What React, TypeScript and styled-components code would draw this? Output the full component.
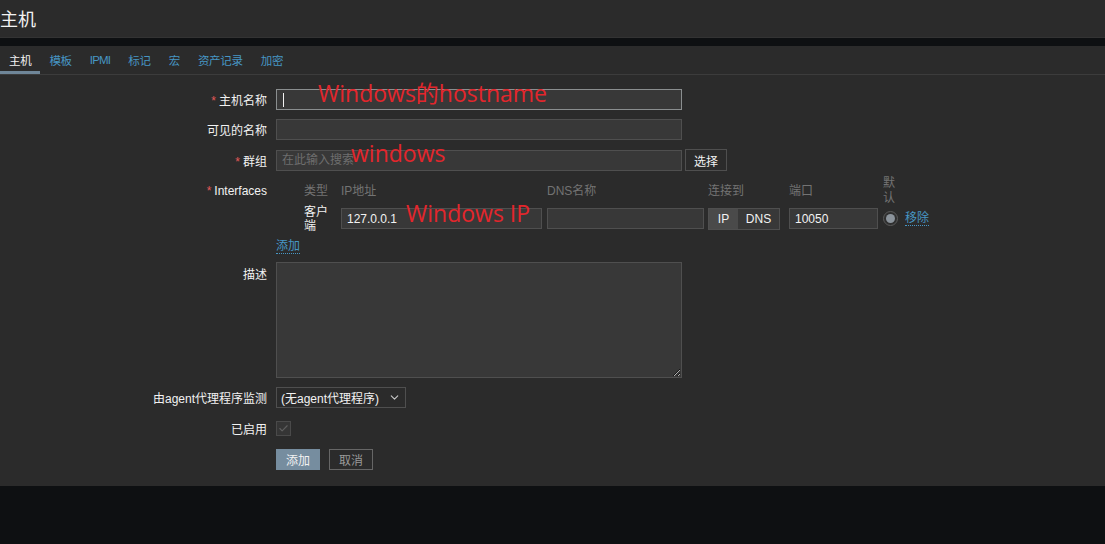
import * as React from 'react';
import styled, { createGlobalStyle } from 'styled-components';
import { ChevronDown, Check } from 'lucide-react';

const GlobalStyle = createGlobalStyle`
  html, body {
    margin: 0;
    padding: 0;
    background: #0e1012;
    color: #f2f2f2;
    font-family: Arial, "Liberation Sans", "Noto Sans CJK SC", sans-serif;
    font-size: 12px;
  }
  * { box-sizing: border-box; }
`;

const Page = styled.div`
  width: 1105px;
  height: 544px;
  overflow: hidden;
  background: #0e1012;
`;

const Header = styled.header`
  height: 38px;
  background: #2b2b2b;
  display: flex;
  align-items: center;
  border-bottom: 1px solid #333;
`;

const Title = styled.h1`
  margin: 0;
  font-size: 18px;
  font-weight: normal;
  color: #f2f2f2;
  padding-bottom: 1px;
`;

const Container = styled.div`
  margin-top: 8px;
  background: #2b2b2b;
  padding-bottom: 16px;
`;

const TabBar = styled.nav`
  display: flex;
  height: 29px;
  border-bottom: 1px solid #3c3c3c;
`;

const Tab = styled.span<{ $active?: boolean }>`
  padding: 2px 9px 0;
  display: flex;
  align-items: center;
  font-size: 11.5px;
  letter-spacing: -0.3px;
  color: ${p => (p.$active ? '#f2f2f2' : '#4796c4')};
  border-bottom: 3px solid ${p => (p.$active ? '#6f8698' : 'transparent')};
`;

const TabLatin = styled.span`
  letter-spacing: -0.8px;
`;

const Form = styled.div`
  position: relative;
  padding-top: 14px;
  display: flex;
  flex-direction: column;
`;

const Row = styled.div<{ $mt?: number; $top?: boolean }>`
  display: flex;
  align-items: ${p => (p.$top ? 'flex-start' : 'center')};
  margin-top: ${p => p.$mt ?? 0}px;
`;

const Label = styled.label<{ $pt?: number }>`
  width: 276px;
  padding-right: 9px;
  text-align: right;
  color: #f2f2f2;
  padding-top: ${p => p.$pt ?? 0}px;
  flex-shrink: 0;
`;

const Req = styled.span`
  color: #e45959;
  margin-right: 3px;
`;

const Field = styled.div`
  display: flex;
  align-items: center;
  gap: 3px;
`;

const InputWrap = styled.div`
  position: relative;
  display: flex;
`;

const Caret = styled.span`
  position: absolute;
  left: 7px;
  top: 4px;
  width: 1px;
  height: 14px;
  background: #f2f2f2;
`;

const Input = styled.input<{ $w: number; $focus?: boolean }>`
  width: ${p => p.$w}px;
  height: 21px;
  background: #383838;
  border: 1px solid ${p => (p.$focus ? '#8a8e8f' : '#4f4f4f')};
  color: #f2f2f2;
  font: inherit;
  padding: 0 5px;
  outline: none;
  &::placeholder { color: #6e6e6e; }
`;

const TextArea = styled.textarea`
  width: 406px;
  height: 116px;
  background: #383838;
  border: 1px solid #4f4f4f;
  color: #f2f2f2;
  font: inherit;
  outline: none;
  color-scheme: dark;
`;

const GrayButton = styled.button`
  height: 22px;
  padding: 0 8px;
  background: #2b2b2b;
  border: 1px solid #4f4f4f;
  color: #f2f2f2;
  font: inherit;
`;

const IfaceGrid = styled.div`
  display: grid;
  grid-template-columns: 28px 37px 206px 161px 81px 94px 22px auto;
  grid-template-rows: 28px 23px;
  row-gap: 2px;
  align-items: center;
`;

const ColHead = styled.span`
  color: #737373;
  line-height: 15px;
`;

const TypeCell = styled.span`
  color: #f2f2f2;
  line-height: 14px;
  width: 26px;
`;

const Toggle = styled.div`
  display: flex;
  width: 72px;
  height: 22px;
  border: 1px solid #4f4f4f;
`;

const ToggleOpt = styled.span<{ $on?: boolean }>`
  flex: ${p => (p.$on ? '0 0 29px' : '1')};
  display: flex;
  align-items: center;
  justify-content: center;
  background: ${p => (p.$on ? '#4a4a4a' : '#383838')};
  color: #f2f2f2;
`;

const Radio = styled.span`
  width: 15px;
  height: 15px;
  border-radius: 50%;
  border: 1px solid #5a5a5a;
  background: #2f2f2f;
  display: flex;
  align-items: center;
  justify-content: center;
  &::after {
    content: '';
    width: 9px;
    height: 9px;
    border-radius: 50%;
    background: #8b939b;
  }
`;

const Link = styled.a`
  color: #4796c4;
  text-decoration: none;
  border-bottom: 1px dotted #4796c4;
  line-height: 14px;
`;

const Select = styled.div`
  width: 130px;
  height: 21px;
  background: #2b2b2b;
  border: 1px solid #4f4f4f;
  display: flex;
  align-items: center;
  justify-content: space-between;
  padding: 0 4px 0 4px;
  color: #f2f2f2;
`;

const CheckBox = styled.span`
  width: 15px;
  height: 15px;
  border: 1px solid #4a4a4a;
  background: #353535;
  display: flex;
  align-items: center;
  justify-content: center;
  color: #5e5e5e;
`;

const PrimaryButton = styled.button`
  height: 21px;
  width: 44px;
  padding: 0;
  background: #768d9f;
  border: 1px solid #768d9f;
  color: #f2f2f2;
  font: inherit;
`;

const CancelButton = styled.button`
  height: 21px;
  width: 44px;
  padding: 0;
  margin-left: 9px;
  background: #2b2b2b;
  border: 1px solid #666;
  color: #9a9a9a;
  font: inherit;
`;

const Note = styled.span<{ $x: number; $y: number }>`
  position: absolute;
  left: ${p => p.$x}px;
  top: ${p => p.$y}px;
  color: #e3262c;
  font-family: "Open Sans", "Noto Sans CJK SC", sans-serif;
  font-size: 23px;
  line-height: 26px;
  pointer-events: none;
  white-space: nowrap;
`;

const tabs = ['主机', '模板', 'IPMI', '标记', '宏', '资产记录', '加密'];

export default function App() {
  return (
    <Page>
      <GlobalStyle />
      <Header>
        <Title>主机</Title>
      </Header>
      <Container>
        <TabBar>
          {tabs.map((t, i) => (
            <Tab key={t} $active={i === 0}>
              {t === 'IPMI' ? <TabLatin>{t}</TabLatin> : t}
            </Tab>
          ))}
        </TabBar>
        <Form>
          <Row>
            <Label><Req>*</Req>主机名称</Label>
            <InputWrap>
              <Input $w={406} $focus />
              <Caret />
            </InputWrap>
          </Row>
          <Row $mt={9}>
            <Label>可见的名称</Label>
            <Field><Input $w={406} /></Field>
          </Row>
          <Row $mt={9}>
            <Label><Req>*</Req>群组</Label>
            <Field>
              <Input $w={406} placeholder="在此输入搜索" />
              <GrayButton>选择</GrayButton>
            </Field>
          </Row>
          <Row $mt={6} $top>
            <Label $pt={7}><Req>*</Req>Interfaces</Label>
            <IfaceGrid>
              <span />
              <ColHead>类型</ColHead>
              <ColHead>IP地址</ColHead>
              <ColHead>DNS名称</ColHead>
              <ColHead>连接到</ColHead>
              <ColHead>端口</ColHead>
              <ColHead style={{ width: 14 }}>默认</ColHead>
              <span />
              <span />
              <TypeCell>客户端</TypeCell>
              <Input $w={201} defaultValue="127.0.0.1" />
              <Input $w={157} />
              <Toggle>
                <ToggleOpt $on>IP</ToggleOpt>
                <ToggleOpt>DNS</ToggleOpt>
              </Toggle>
              <Input $w={89} defaultValue="10050" />
              <Radio />
              <Link>移除</Link>
            </IfaceGrid>
          </Row>
          <Row $mt={9}>
            <Label />
            <Link>添加</Link>
          </Row>
          <Row $mt={8} $top>
            <Label $pt={3}>描述</Label>
            <TextArea />
          </Row>
          <Row $mt={9}>
            <Label>由agent代理程序监测</Label>
            <Select>
              <span>(无agent代理程序)</span>
              <ChevronDown size={13} color="#c8c8c8" strokeWidth={2} />
            </Select>
          </Row>
          <Row $mt={12}>
            <Label>已启用</Label>
            <CheckBox><Check size={11} strokeWidth={2.5} /></CheckBox>
          </Row>
          <Row $mt={12}>
            <Label />
            <PrimaryButton>添加</PrimaryButton>
            <CancelButton>取消</CancelButton>
          </Row>
          <Note $x={318} $y={5}>Windows的hostname</Note>
          <Note $x={351} $y={65}>windows</Note>
          <Note $x={406} $y={125}>Windows IP</Note>
        </Form>
      </Container>
    </Page>
  );
}
